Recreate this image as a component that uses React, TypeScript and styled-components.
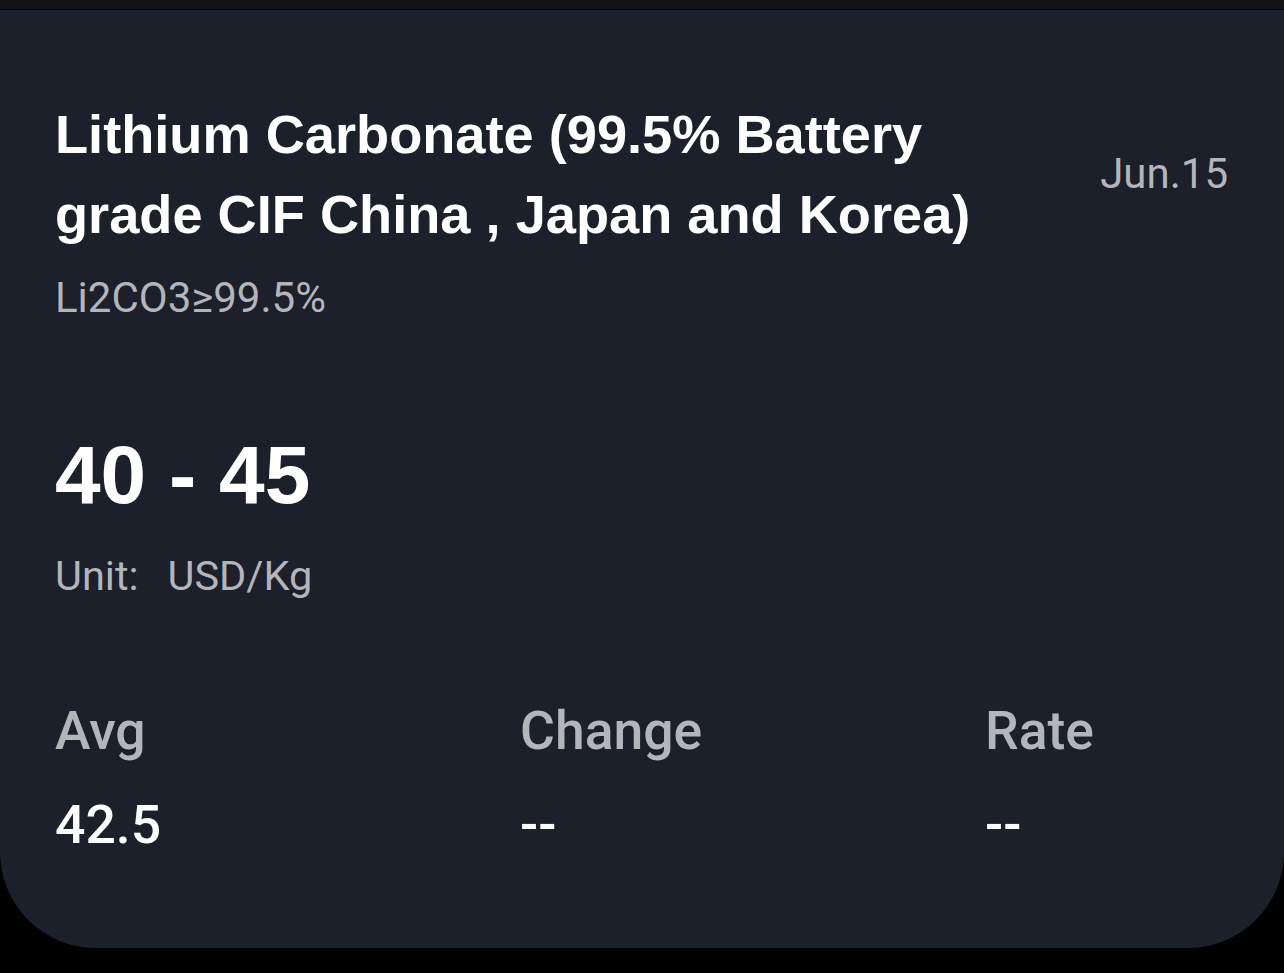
import React from "react";
import styled, { createGlobalStyle } from "styled-components";

const Global = createGlobalStyle`
  html, body { margin: 0; padding: 0; background: #000; }
  body { width: 1284px; height: 973px; overflow: hidden; }
  * { box-sizing: border-box; }
`;

const Page = styled.div`
  display: flex;
  flex-direction: column;
  width: 1284px;
  height: 973px;
  background: #000;
`;

const TopStrip = styled.div`
  height: 9px;
  background: #131313;
  margin-bottom: 1px;
`;

const Card = styled.section`
  height: 938px;
  background: #1b202b;
  border-radius: 0 0 96px 96px;
  padding: 84px 56px 0 55px;
  display: flex;
  flex-direction: column;
`;

const Header = styled.div`
  display: flex;
  align-items: center;
  justify-content: space-between;
`;

const Title = styled.h1`
  margin: 0;
  max-width: 990px;
  font-family: "Liberation Sans", Arial, sans-serif;
  font-weight: 700;
  font-size: 54.2px;
  line-height: 80px;
  color: #ffffff;
`;

const DateText = styled.div`
  font-family: Roboto, "Noto Sans", sans-serif;
  font-size: 42px;
  line-height: 1;
  color: #b3b5bb;
`;

const Grade = styled.div`
  margin-top: 19px;
  font-family: Roboto, "Noto Sans", sans-serif;
  font-size: 42px;
  line-height: 49px;
  color: #b3b5bb;
`;

const Price = styled.div`
  margin-top: 112px;
  font-family: "Liberation Sans", Arial, sans-serif;
  font-weight: 700;
  font-size: 82px;
  line-height: 1;
  color: #ffffff;
`;

const Unit = styled.div`
  margin-top: 39px;
  display: flex;
  gap: 29px;
  font-family: Roboto, "Noto Sans", sans-serif;
  font-size: 41.5px;
  line-height: 1;
  color: #b3b5bb;
`;

const Stats = styled.div`
  margin-top: 107px;
  display: grid;
  grid-template-columns: 465px 465px 1fr;
`;

const Stat = styled.div`
  display: flex;
  flex-direction: column;
  gap: 41px;
`;

const StatText = styled.div<{ $value?: boolean }>`
  font-family: Roboto, "Noto Sans", sans-serif;
  font-weight: 500;
  font-size: 53.5px;
  line-height: 1;
  color: ${(p) => (p.$value ? "#ffffff" : "#b3b5bb")};
`;

const stats = [
  { label: "Avg", value: "42.5" },
  { label: "Change", value: "--" },
  { label: "Rate", value: "--" },
];

export default function App() {
  return (
    <>
      <Global />
      <Page>
        <TopStrip />
        <Card>
          <Header>
            <Title>Lithium Carbonate (99.5% Battery grade CIF China , Japan and Korea)</Title>
            <DateText>Jun.15</DateText>
          </Header>
          <Grade>Li2CO3≥99.5%</Grade>
          <Price>40 - 45</Price>
          <Unit>
            <span>Unit:</span>
            <span>USD/Kg</span>
          </Unit>
          <Stats>
            {stats.map((s) => (
              <Stat key={s.label}>
                <StatText>{s.label}</StatText>
                <StatText $value>{s.value}</StatText>
              </Stat>
            ))}
          </Stats>
        </Card>
      </Page>
    </>
  );
}
